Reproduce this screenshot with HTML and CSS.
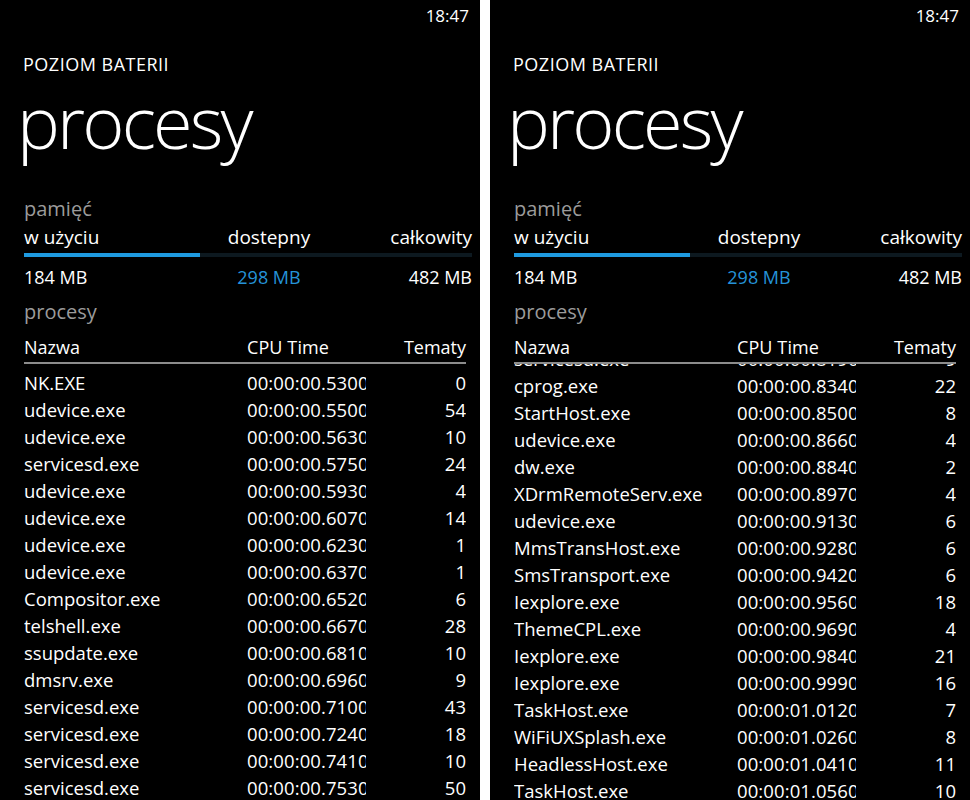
FILE: index.html
```html
<!DOCTYPE html>
<html lang="pl">
<head>
<meta charset="utf-8">
<title>procesy</title>
<link rel="stylesheet" href="styles.css">
</head>
<body>
<div class="screens">
  <section class="phone">
    <div class="status"><span class="clock">18:47</span></div>
    <div class="content">
      <div class="app-title">POZIOM BATERII</div>
      <h1 class="page-title">procesy</h1>
      <div class="section-label first">pamięć</div>
      <div class="mem-grid labels"><span>w użyciu</span><span class="mid">dostepny</span><span class="end">całkowity</span></div>
      <div class="bar"><div class="bar-fill" style="width:176px"></div></div>
      <div class="mem-grid values"><span>184 MB</span><span class="mid accent">298 MB</span><span class="end">482 MB</span></div>
      <div class="section-label">procesy</div>
      <div class="table">
        <div class="row head"><span class="name">Nazwa</span><span class="time">CPU Time</span><span class="num">Tematy</span></div>
        <div class="rule"></div>
        <div class="list">
          <div class="rows">
            <div class="row"><span class="name">NK.EXE</span><span class="time">00:00:00.5300000</span><span class="num">0</span></div>
            <div class="row"><span class="name">udevice.exe</span><span class="time">00:00:00.5500000</span><span class="num">54</span></div>
            <div class="row"><span class="name">udevice.exe</span><span class="time">00:00:00.5630000</span><span class="num">10</span></div>
            <div class="row"><span class="name">servicesd.exe</span><span class="time">00:00:00.5750000</span><span class="num">24</span></div>
            <div class="row"><span class="name">udevice.exe</span><span class="time">00:00:00.5930000</span><span class="num">4</span></div>
            <div class="row"><span class="name">udevice.exe</span><span class="time">00:00:00.6070000</span><span class="num">14</span></div>
            <div class="row"><span class="name">udevice.exe</span><span class="time">00:00:00.6230000</span><span class="num">1</span></div>
            <div class="row"><span class="name">udevice.exe</span><span class="time">00:00:00.6370000</span><span class="num">1</span></div>
            <div class="row"><span class="name">Compositor.exe</span><span class="time">00:00:00.6520000</span><span class="num">6</span></div>
            <div class="row"><span class="name">telshell.exe</span><span class="time">00:00:00.6670000</span><span class="num">28</span></div>
            <div class="row"><span class="name">ssupdate.exe</span><span class="time">00:00:00.6810000</span><span class="num">10</span></div>
            <div class="row"><span class="name">dmsrv.exe</span><span class="time">00:00:00.6960000</span><span class="num">9</span></div>
            <div class="row"><span class="name">servicesd.exe</span><span class="time">00:00:00.7100000</span><span class="num">43</span></div>
            <div class="row"><span class="name">servicesd.exe</span><span class="time">00:00:00.7240000</span><span class="num">18</span></div>
            <div class="row"><span class="name">servicesd.exe</span><span class="time">00:00:00.7410000</span><span class="num">10</span></div>
            <div class="row"><span class="name">servicesd.exe</span><span class="time">00:00:00.7530000</span><span class="num">50</span></div>
          </div>
        </div>
      </div>
    </div>
  </section>

  <section class="phone">
    <div class="status"><span class="clock">18:47</span></div>
    <div class="content">
      <div class="app-title">POZIOM BATERII</div>
      <h1 class="page-title">procesy</h1>
      <div class="section-label first">pamięć</div>
      <div class="mem-grid labels"><span>w użyciu</span><span class="mid">dostepny</span><span class="end">całkowity</span></div>
      <div class="bar"><div class="bar-fill" style="width:176px"></div></div>
      <div class="mem-grid values"><span>184 MB</span><span class="mid accent">298 MB</span><span class="end">482 MB</span></div>
      <div class="section-label">procesy</div>
      <div class="table">
        <div class="row head"><span class="name">Nazwa</span><span class="time">CPU Time</span><span class="num">Tematy</span></div>
        <div class="rule"></div>
        <div class="list">
          <div class="rows scrolled">
            <div class="row"><span class="name">servicesd.exe</span><span class="time">00:00:00.8190000</span><span class="num">9</span></div>
            <div class="row"><span class="name">cprog.exe</span><span class="time">00:00:00.8340000</span><span class="num">22</span></div>
            <div class="row"><span class="name">StartHost.exe</span><span class="time">00:00:00.8500000</span><span class="num">8</span></div>
            <div class="row"><span class="name">udevice.exe</span><span class="time">00:00:00.8660000</span><span class="num">4</span></div>
            <div class="row"><span class="name">dw.exe</span><span class="time">00:00:00.8840000</span><span class="num">2</span></div>
            <div class="row"><span class="name">XDrmRemoteServ.exe</span><span class="time">00:00:00.8970000</span><span class="num">4</span></div>
            <div class="row"><span class="name">udevice.exe</span><span class="time">00:00:00.9130000</span><span class="num">6</span></div>
            <div class="row"><span class="name">MmsTransHost.exe</span><span class="time">00:00:00.9280000</span><span class="num">6</span></div>
            <div class="row"><span class="name">SmsTransport.exe</span><span class="time">00:00:00.9420000</span><span class="num">6</span></div>
            <div class="row"><span class="name">Iexplore.exe</span><span class="time">00:00:00.9560000</span><span class="num">18</span></div>
            <div class="row"><span class="name">ThemeCPL.exe</span><span class="time">00:00:00.9690000</span><span class="num">4</span></div>
            <div class="row"><span class="name">Iexplore.exe</span><span class="time">00:00:00.9840000</span><span class="num">21</span></div>
            <div class="row"><span class="name">Iexplore.exe</span><span class="time">00:00:00.9990000</span><span class="num">16</span></div>
            <div class="row"><span class="name">TaskHost.exe</span><span class="time">00:00:01.0120000</span><span class="num">7</span></div>
            <div class="row"><span class="name">WiFiUXSplash.exe</span><span class="time">00:00:01.0260000</span><span class="num">8</span></div>
            <div class="row"><span class="name">HeadlessHost.exe</span><span class="time">00:00:01.0410000</span><span class="num">11</span></div>
            <div class="row"><span class="name">TaskHost.exe</span><span class="time">00:00:01.0560000</span><span class="num">10</span></div>
          </div>
        </div>
      </div>
    </div>
  </section>
</div>
</body>
</html>
```

FILE: styles.css
```css
* { box-sizing: border-box; }

html, body {
  margin: 0;
  padding: 0;
  background: #ffffff;
}

body {
  width: 970px;
  height: 800px;
  overflow: hidden;
  font-family: "Open Sans", "Noto Sans", "DejaVu Sans", sans-serif;
  color: #ffffff;
}

.screens {
  display: flex;
  gap: 10px;
  height: 800px;
}

.phone {
  width: 480px;
  height: 800px;
  background: #000000;
  overflow: hidden;
  display: flex;
  flex-direction: column;
}

.status {
  display: flex;
  justify-content: flex-end;
  padding: 4px 11px 0 0;
  height: 28px;
}

.clock {
  font-size: 17px;
  line-height: 23px;
}

.content {
  padding: 0 8px 0 24px;
  display: flex;
  flex-direction: column;
  flex: 1;
  min-height: 0;
}

.app-title {
  margin-top: 24px;
  margin-left: -1px;
  font-size: 18px;
  line-height: 24px;
  letter-spacing: 0.5px;
}

.page-title {
  margin: 5px 0 0 -7px;
  font-size: 72px;
  font-weight: 300;
  line-height: 80px;
  letter-spacing: -2.8px;
}

.section-label {
  color: #9b9b9b;
  font-size: 20px;
  line-height: 27px;
  margin-top: 9px;
}

.section-label.first {
  margin-top: 34px;
}

.mem-grid {
  display: grid;
  grid-template-columns: 200px 90px 1fr;
}

.mem-grid .mid { text-align: center; }
.mem-grid .end { text-align: right; }

.labels {
  margin-top: 2px;
  font-size: 19px;
  line-height: 26px;
}

.values {
  font-size: 18px;
  line-height: 24px;
  margin-top: 8px;
}

.accent { color: #2593d8; }

.bar {
  margin-top: 3px;
  height: 4px;
  background: #0d1920;
}

.bar-fill {
  height: 4px;
  background: #1e9ae0;
}

.table {
  margin-top: 10px;
  padding-right: 6px;
  display: flex;
  flex-direction: column;
  flex: 1;
  min-height: 0;
}

.row {
  display: grid;
  grid-template-columns: 223px 119px 1fr;
  font-size: 18.5px;
  line-height: 27px;
  height: 27px;
  white-space: nowrap;
}

.row.head {
  font-size: 18px;
  line-height: 24px;
  height: 24px;
}

.row .name { overflow: hidden; }
.row .time { overflow: hidden; letter-spacing: 0.1px; }
.row .num { text-align: right; }

.rule {
  margin-top: 3px;
  height: 2px;
  background: #8c8c8c;
}

.list {
  flex: 1;
  min-height: 0;
  overflow: hidden;
}

.rows {
  padding-top: 5px;
}

.rows.scrolled {
  padding-top: 0;
  transform: translateY(-19px);
}
```
